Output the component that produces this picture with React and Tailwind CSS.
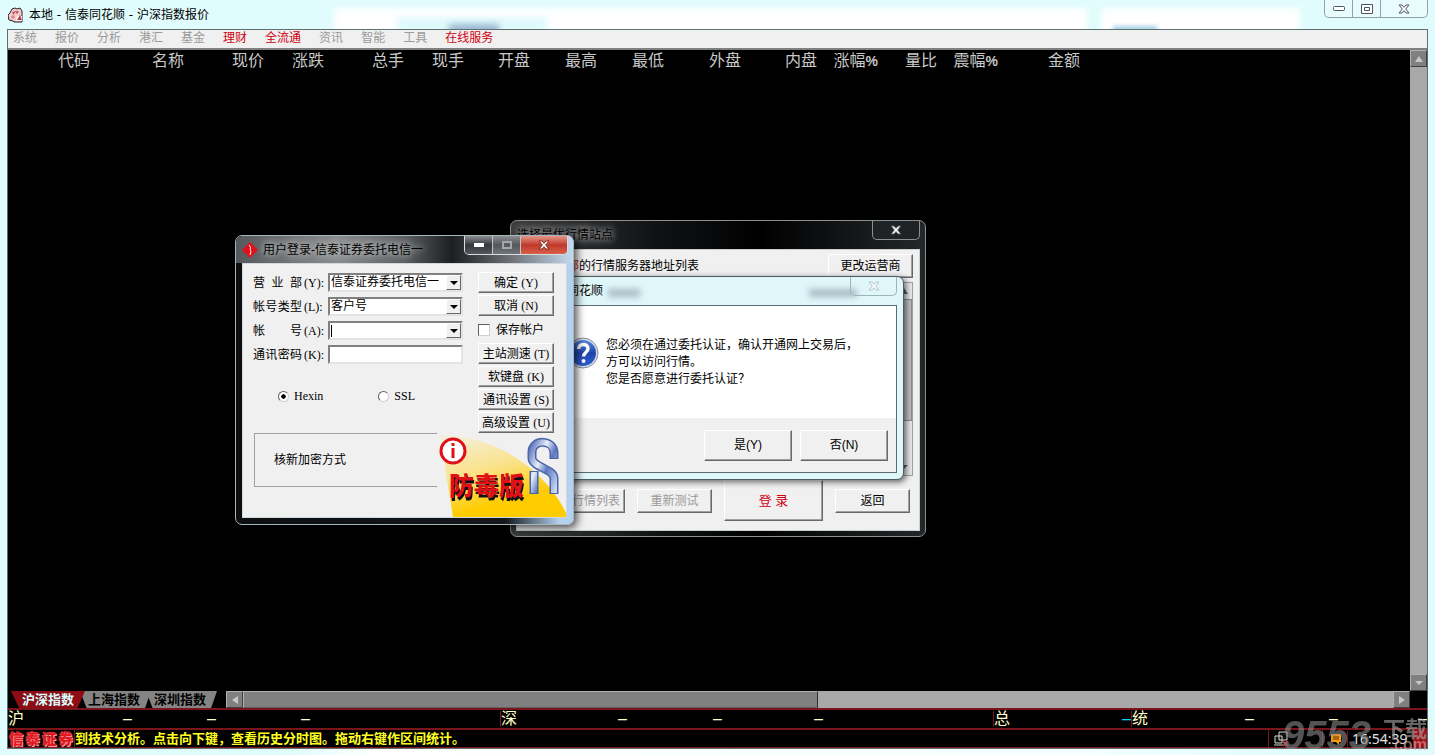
import React from "react";
import clsx from "clsx";

const menus = [
  { label: "系统" },
  { label: "报价" },
  { label: "分析" },
  { label: "港汇" },
  { label: "基金" },
  { label: "理财", hot: true },
  { label: "全流通", hot: true },
  { label: "资讯" },
  { label: "智能" },
  { label: "工具" },
  { label: "在线服务", hot: true },
];

const columns = [
  { label: "代码", width: "w-[82px]" },
  { label: "名称", width: "w-[94px]" },
  { label: "现价", width: "w-[80px]" },
  { label: "涨跌", width: "w-[60px]" },
  { label: "总手", width: "w-[80px]" },
  { label: "现手", width: "w-[60px]" },
  { label: "开盘", width: "w-[66px]" },
  { label: "最高", width: "w-[67px]" },
  { label: "最低", width: "w-[67px]" },
  { label: "外盘", width: "w-[77px]" },
  { label: "内盘", width: "w-[76px]" },
  { label: "涨幅", percent: true, width: "w-[61px]" },
  { label: "量比", width: "w-[59px]" },
  { label: "震幅", percent: true, width: "w-[61px]" },
  { label: "金额", width: "w-[82px]" },
];

const bevel =
  "bg-[#f0f0f0] border border-t-white border-l-white border-r-[#696969] border-b-[#696969] shadow-[inset_-1px_-1px_0_#a0a0a0] whitespace-nowrap";
const sunken =
  "bg-white border-2 border-t-[#808080] border-l-[#808080] border-r-[#e3e3e3] border-b-[#e3e3e3]";

function Key({ children }) {
  return (
    <span className="font-['Liberation_Serif',serif] text-xs leading-4">
      {children}
    </span>
  );
}

function Triangle({ dir, className }) {
  const points = {
    up: "4,1 8,7 0,7",
    down: "0,2 8,2 4,6",
    left: "7,0 7,8 1,4",
    right: "1,0 7,4 1,8",
  };
  return (
    <svg viewBox="0 0 8 8" className={clsx("w-2 h-2", className)}>
      <polygon points={points[dir]} fill="currentColor" />
    </svg>
  );
}

function ScrollButton({ dir, label }) {
  return (
    <button
      type="button"
      aria-label={label}
      className="w-[17px] h-[17px] shrink-0 flex items-center justify-center bg-[#808080] text-[#c8c8c8] border border-t-[#b0b0b0] border-l-[#b0b0b0] border-r-[#404040] border-b-[#404040]"
    >
      <Triangle dir={dir} />
    </button>
  );
}

function CloseGlyph({ fill, stroke }) {
  return (
    <svg viewBox="0 0 12 10" className="w-3 h-[10px]">
      <path
        d="M1 1h3l2 2.3L8 1h3L7.7 5 11 9H8L6 6.7 4 9H1l3.3-4z"
        fill={fill}
        stroke={stroke}
        strokeWidth="1"
      />
    </svg>
  );
}

function AppTitle() {
  return (
    <header className="relative h-[29px] flex items-center justify-between">
      <div className="absolute inset-0 overflow-hidden" aria-hidden="true">
        <div className="absolute left-[23%] right-[24%] top-2 h-8 bg-white blur-[3px]" />
        <div className="absolute left-[77%] right-[9%] top-2 h-8 bg-white blur-[3px]" />
        <div className="absolute left-[390px] w-[150px] top-[17px] h-4 bg-[#e0fafc] blur-[3px]" />
        <div className="absolute left-[442px] w-[50px] top-[24px] h-3 bg-[#9cb8d0] blur-[3px]" />
        <div className="absolute left-[1106px] w-[44px] top-[26px] h-2 bg-[#a8d0e8] blur-[2px]" />
      </div>
      <div className="relative flex items-center gap-[5px] pl-px">
        <svg viewBox="0 0 16 16" className="w-4 h-4">
          <path
            d="M4 2 7 1 9 2l3-1 2 3v11H6L5 14 1 13 0 8l2-2z"
            fill="#f3c9cb"
            stroke="#2b2024"
          />
          <path d="M9 9h5v5H8z" fill="#fff" />
          <path d="M12 8 9 13h5zM4 5l2 3 1-4 2 3 2-3" fill="#b3414b" />
          <path d="M3 10h4M5 12V8" stroke="#d2727a" />
        </svg>
        <h1 className="font-['DejaVu_Sans','Noto_Sans_CJK_SC',sans-serif] text-xs text-black">
          本地 - 信泰同花顺 - 沪深指数报价
        </h1>
      </div>
      <div className="relative self-start h-[18px] flex rounded-b-[5px] border border-t-0 border-[#8fa3a8] bg-[#e9fbfc] divide-x divide-[#8fa3a8]">
        <button
          type="button"
          aria-label="最小化"
          className="w-7 flex items-center justify-center"
        >
          <svg viewBox="0 0 12 5" className="w-3 h-[5px]">
            <rect x=".5" y=".5" width="11" height="4" rx="1" fill="#fff" stroke="#4b5563" />
          </svg>
        </button>
        <button
          type="button"
          aria-label="还原"
          className="w-7 flex items-center justify-center"
        >
          <svg viewBox="0 0 12 10" className="w-3 h-[10px]">
            <path
              d="M.5.5h11v9H.5zM3.500 3.500h5v3h-5z"
              fill="#fff"
              stroke="#4b5563"
            />
          </svg>
        </button>
        <button
          type="button"
          aria-label="关闭"
          className="w-[46px] flex items-center justify-center"
        >
          <CloseGlyph fill="#fff" stroke="#4b5563" />
        </button>
      </div>
    </header>
  );
}

function MenuBar() {
  return (
    <nav className="h-5 px-[5px] flex items-start gap-[18px] bg-[#f0f0f0] border-b-2 border-[#808080]">
      {menus.map((m) => (
        <button
          key={m.label}
          type="button"
          className={clsx(
            "text-xs leading-4",
            m.hot ? "text-[#d00010]" : "text-[#9a9a9a]"
          )}
        >
          {m.label}
        </button>
      ))}
    </nav>
  );
}

function QuoteTable() {
  return (
    <div className="flex-1 min-w-0 overflow-hidden">
      <table className="table-fixed w-[1072px] text-base leading-[22px] text-[#c8c8c8]">
        <thead>
          <tr>
            {columns.map((c) => (
              <th
                key={c.label}
                className={clsx(c.width, "p-0 text-right font-normal")}
              >
                {c.label}
                {c.percent && (
                  <span className="font-['Liberation_Sans',sans-serif] text-sm leading-5 font-bold">
                    %
                  </span>
                )}
              </th>
            ))}
          </tr>
        </thead>
      </table>
    </div>
  );
}

function SheetTabs() {
  const tabs = ["沪深指数", "上海指数", "深圳指数"];
  return (
    <div className="w-[218px] shrink-0 flex pl-[3px] text-[13px] leading-[18px] font-bold">
      {tabs.map((t, i) => (
        <button
          key={t}
          type="button"
          className={clsx(
            "w-[74px] h-[17px]",
            i === 0
              ? "relative z-10 bg-[#8e0c14] text-[#d6ffff] [clip-path:polygon(0_0,100%_0,90%_100%,11%_100%)]"
              : "-ml-2 bg-[#848484] text-black [clip-path:polygon(4%_0,100%_0,92%_100%,13%_100%)]"
          )}
        >
          {t}
        </button>
      ))}
    </div>
  );
}

function Cell({ className, children = "–" }) {
  return <span className={clsx("text-right", className)}>{children}</span>;
}

function IndexRow() {
  return (
    <div className="h-5 flex items-center border-t-2 border-[#7c141c] text-base leading-4 text-[#ffffc8] overflow-hidden">
      <div className="w-[492px] flex">
        <span>沪</span>
        <Cell className="w-[108px]" />
        <Cell className="w-[84px]" />
        <Cell className="w-[94px]" />
      </div>
      <div className="w-[493px] flex border-l border-[#7c141c]">
        <span>深</span>
        <Cell className="w-[110px]" />
        <Cell className="w-[95px]" />
        <Cell className="w-[101px]" />
      </div>
      <div className="w-[138px] flex justify-between border-l border-[#7c141c]">
        <span>总</span>
        <Cell className="text-cyan-400" />
      </div>
      <div className="flex-1 flex border-l border-[#7c141c]">
        <span>统</span>
        <Cell className="w-[106px]" />
        <Cell className="w-[84px]" />
        <Cell className="flex-1" />
      </div>
    </div>
  );
}

function TickerRow() {
  return (
    <footer className="relative h-[20px] flex items-center border-t-2 border-b border-[#7c141c]">
      <div className="w-[67px] h-full flex items-center justify-around border-r border-[#7c141c] text-sm leading-4 font-black text-[#e01822] [text-shadow:0_0_2px_#ff8a8a,1px_1px_0_#ff9c9c,-1px_-1px_0_#c01018]">
        <span>信</span>
        <span>泰</span>
        <span>证</span>
        <span>券</span>
      </div>
      <p className="flex-1 text-[13px] leading-4 font-bold text-[#ffff20] whitespace-nowrap">
        到技术分析。点击向下键，查看历史分时图。拖动右键作区间统计。
      </p>
      <div className="h-full flex items-center border-l border-[#7c141c] pl-1">
        <svg viewBox="0 0 16 16" className="w-4 h-4">
          <path
            d="M6 1h8v8H6zM2 5h7v7H2zM1 14h9"
            fill="#111"
            stroke="#d8d8d8"
          />
          <path d="m10 10 5 5m0-5-5 5" stroke="#e02020" strokeWidth="1.500" />
        </svg>
        <div className="w-[34px] h-full mr-[7px] border-r border-[#7c141c]" />
        <svg viewBox="0 0 12 12" className="w-3 h-3">
          <path d="M1 1h10v8H9v3L6 9H1z" fill="#f59a12" />
          <path d="M3 4h6M3 6h6" stroke="#5a3200" />
        </svg>
        <time className="w-[66px] ml-[5px] pl-1 border-l border-[#7c141c] font-['Noto_Sans',sans-serif] text-sm leading-4 text-[#e0e0e0]">
          16:54:39
        </time>
        <div className="w-[14px] h-full bg-[#a01018]" />
      </div>
      <div
        className="absolute right-0 -bottom-1 w-[145px] flex items-end justify-between opacity-60 text-[#a8a8a8]"
        aria-hidden="true"
      >
        <span className="font-['Liberation_Sans',sans-serif] text-[40px] leading-8 font-black italic text-[#8a8a8a]">
          9553
        </span>
        <span className="flex flex-col items-end">
          <span className="text-[22px] leading-[18px] font-bold whitespace-nowrap">
            下载
          </span>
          <span className="font-['Liberation_Sans',sans-serif] text-base leading-3 font-bold text-[#e0a8a8]">
            .com
          </span>
        </span>
      </div>
    </footer>
  );
}

function ServerWindow() {
  return (
    <section className="absolute left-[510px] top-[220px] w-[416px] h-[317px] flex flex-col rounded-[7px] border border-[#8c9090] bg-[linear-gradient(to_right,#3a3c3d,#101214_35%,#000_60%,#24272a)] px-[5px] pb-[5px]">
      <div className="h-7 flex items-center justify-between">
        <h2 className="px-px text-xs text-black [text-shadow:0_0_6px_#999,0_0_8px_#999,0_0_10px_#888]">
          选择最优行情站点
        </h2>
        <button
          type="button"
          aria-label="关闭"
          className="self-start w-12 h-[19px] flex items-center justify-center rounded-b-[5px] border border-t-0 border-[#8c9090] bg-[#202326]"
        >
          <CloseGlyph fill="#fff" stroke="#555" />
        </button>
      </div>
      <div className="flex-1 flex flex-col border border-[#c8d0d0] bg-[#f0f0f0] pl-2 pr-[6px] pt-1">
        <div className="flex justify-between items-center text-xs">
          <p className="w-[174px] flex justify-end whitespace-nowrap">
            电信<span className="text-[#c02020]">部</span>的行情服务器地址列表
          </p>
          <button type="button" className={clsx(bevel, "w-[85px] h-6")}>
            更改运营商
          </button>
        </div>
        <div className="mt-1 h-[194px] flex justify-end border border-[#a0a0a0]">
          <div className="w-4 flex flex-col items-center text-[#606060] bg-[#e8e8e8]">
            <Triangle dir="up" className="my-1" />
            <div className="w-full h-[122px] bg-[#c0c0c4] border border-[#8a8a8a]" />
            <div className="flex-1" />
            <Triangle dir="down" className="my-1" />
          </div>
        </div>
        <div className="pt-1 flex items-center justify-end gap-3 pr-[3px] text-xs">
          <button type="button" disabled className={clsx(bevel, "w-[75px] h-6 pr-1 text-right text-[#9a9a9a]")}>
            行情列表
          </button>
          <button type="button" disabled className={clsx(bevel, "w-[75px] h-6 text-[#9a9a9a]")}>
            重新测试
          </button>
          <button type="button" className={clsx(bevel, "w-[99px] h-[41px] text-[13px] text-[#d00010]")}>
            登 录
          </button>
          <button type="button" className={clsx(bevel, "w-[75px] h-6")}>
            返回
          </button>
        </div>
      </div>
    </section>
  );
}

function ConfirmBox() {
  return (
    <section
      role="dialog"
      aria-label="同花顺"
      className="absolute left-[535px] top-[276px] w-[369px] h-[204px] flex flex-col rounded-[7px] border border-[#4c5c60] bg-[#e0f7fa] shadow-[2px_2px_6px_rgba(0,0,0,0.6)] px-[6px] pb-[6px]"
    >
      <div className="relative h-7 flex items-center justify-between">
        <div className="absolute inset-0 overflow-hidden" aria-hidden="true">
          <div className="absolute left-[66px] w-8 top-3 h-2 bg-[#a8bac2] blur-[3px]" />
          <div className="absolute right-10 w-12 top-3 h-2 bg-[#a8bac2] blur-[3px]" />
        </div>
        <h2 className="relative pl-px text-xs text-black">信泰同花顺</h2>
        <button
          type="button"
          aria-label="关闭"
          className="relative self-start w-[47px] h-[19px] flex items-center justify-center rounded-b-[5px] border border-t-0 border-[#9fb4b8]"
        >
          <CloseGlyph fill="#fff" stroke="#b4c2c6" />
        </button>
      </div>
      <div className="flex-1 flex flex-col border border-[#5a6c70] bg-[#f0f0f0]">
        <div className="flex-1 flex items-start gap-[7px] pl-6 pt-[31px] bg-white">
          <svg viewBox="0 0 32 32" className="w-8 h-8 shrink-0">
            <defs>
              <linearGradient id="ask" x1="0" y1="0" x2="0" y2="1">
                <stop offset="0" stopColor="#5b86e0" />
                <stop offset=".5" stopColor="#1f45ad" />
                <stop offset="1" stopColor="#2f5fd0" />
              </linearGradient>
            </defs>
            <circle cx="16" cy="16" r="15" fill="#d8dde6" stroke="#8590a4" />
            <circle cx="16" cy="16" r="13" fill="url(#ask)" />
            <path
              d="M11.500 12c0-6 9.500-6 9.500-.5 0 4-4.500 4-4.500 8"
              fill="none"
              stroke="#fff"
              strokeWidth="3.500"
            />
            <circle cx="16.500" cy="24" r="2" fill="#fff" />
          </svg>
          <p className="text-xs leading-[17px] text-black">
            您必须在通过委托认证，确认开通网上交易后，
            <br />
            方可以访问行情。
            <br />
            您是否愿意进行委托认证？
          </p>
        </div>
        <div className="h-[54px] flex items-center justify-end gap-2 pr-2 text-xs">
          <button type="button" className={clsx(bevel, "w-[88px] h-[31px]")}>
            是(Y)
          </button>
          <button type="button" className={clsx(bevel, "w-[88px] h-[31px]")}>
            否(N)
          </button>
        </div>
      </div>
    </section>
  );
}

function DropButton() {
  return (
    <span className="w-[15px] h-[15px] shrink-0 flex items-center justify-center bg-[#f0f0f0] border border-t-white border-l-white border-r-[#696969] border-b-[#696969]">
      <Triangle dir="down" />
    </span>
  );
}

function FieldLabel({ htmlFor, chars, hotkey }) {
  return (
    <label htmlFor={htmlFor} className="w-[75px] flex gap-[2px] text-xs leading-4">
      <span className="w-[49px] flex justify-between">
        {chars.split("").map((ch) => (
          <span key={ch}>{ch}</span>
        ))}
      </span>
      <Key>{hotkey}</Key>
    </label>
  );
}

function SelectRow({ id, chars, hotkey, value }) {
  return (
    <div className="flex items-center h-[19px]">
      <FieldLabel htmlFor={id} chars={chars} hotkey={hotkey} />
      <div className={clsx(sunken, "relative flex-1 min-w-0 h-[19px] flex")}>
        <select
          id={id}
          defaultValue={value}
          className="appearance-none w-full h-[15px] pl-px text-xs leading-[15px] bg-transparent outline-none"
        >
          <option>{value}</option>
        </select>
        <div className="absolute right-0 top-0 pointer-events-none">
          <DropButton />
        </div>
      </div>
    </div>
  );
}

function Banner() {
  return (
    <svg viewBox="0 0 127 84" className="w-[127px] h-[84px] shrink-0">
      <defs>
        <linearGradient id="wedge" x1=".1" y1="0" x2=".5" y2="1">
          <stop offset="0" stopColor="#f4efdc" />
          <stop offset=".45" stopColor="#fbe28a" />
          <stop offset=".85" stopColor="#ffcc00" />
        </linearGradient>
        <linearGradient id="steel" x1="0" y1="0" x2="1" y2="1">
          <stop offset="0" stopColor="#5a74b8" />
          <stop offset=".35" stopColor="#e8eefc" />
          <stop offset=".6" stopColor="#5b77bd" />
          <stop offset="1" stopColor="#c8d6f4" />
        </linearGradient>
      </defs>
      <path d="M1 2C56 2 106 36 127 80v4H14z" fill="url(#wedge)" />
      <g fill="none">
        <path
          d="M115 26v-6c0-14-22-14-22-1v6c0 9 22 11 22 20v16M95 38v23"
          stroke="#4a64a8"
          strokeWidth="9"
        />
        <path
          d="M115 25v-5c0-14-22-14-22-1v6c0 9 22 11 22 20v15M95 39v21"
          stroke="url(#steel)"
          strokeWidth="6"
        />
      </g>
      <circle cx="14" cy="18" r="12" fill="#fff" stroke="#e01018" strokeWidth="3" />
      <path d="M12.500 15h3v10h-3zM12.500 10h3v3h-3z" fill="#e01018" />
      <g className="[filter:drop-shadow(1px_3px_0_#111)]">
        <text
          x="10"
          y="62"
          fontFamily="'Noto Sans CJK SC', sans-serif"
          fontSize="25"
          fontWeight="900"
          fill="#e01018"
        >
          防毒版
        </text>
      </g>
    </svg>
  );
}

function LoginWindow() {
  const cap = "flex items-center justify-center h-full";
  return (
    <section
      role="dialog"
      aria-label="用户登录"
      className="absolute left-[235px] top-[235px] w-[339px] h-[290px] flex flex-col rounded-[7px] border border-[#a8b4bc] bg-[linear-gradient(to_right,#0c0e10,#14181c_80%,#b4d2f0_96%)] shadow-[3px_3px_8px_rgba(0,0,0,0.7)] px-[6px] pb-[6px]"
    >
      <div className="-mx-[6px] pl-[6px] pr-[5px] h-[27px] flex items-center justify-between rounded-t-[6px] bg-[linear-gradient(to_right,#55595c,#8a8c8e_30%,#5c5f61_50%,#1c1e20_64%,#707478_82%,#c4daf0)]">
        <h2 className="flex items-center gap-[5px] text-xs text-black [text-shadow:0_0_6px_#ccc,0_0_8px_#bbb]">
          <svg viewBox="0 0 16 16" className="w-4 h-4">
            <path d="m8 0 8 8-8 8-8-8z" fill="#e01018" />
            <path d="M7 3c3 3 0 4 2 6l-1 4" fill="none" stroke="#fff" />
          </svg>
          用户登录-信泰证券委托电信一
        </h2>
        <div className="self-start h-[19px] flex overflow-hidden rounded-b-[5px] border border-t-0 border-[#d8dde0] divide-x divide-[#c0c6ca]">
          <button
            type="button"
            aria-label="最小化"
            className={clsx(cap, "w-7 bg-[linear-gradient(#8a8e92,#34383c_50%,#54585c)]")}
          >
            <span className="w-[10px] h-1 bg-white" />
          </button>
          <button
            type="button"
            aria-label="最大化"
            disabled
            className={clsx(cap, "w-7 bg-[linear-gradient(#8a8e92,#54585c_50%,#70757a)]")}
          >
            <span className="w-[10px] h-2 border-2 border-[#a4a8ac]" />
          </button>
          <button
            type="button"
            aria-label="关闭"
            className={clsx(cap, "w-[46px] bg-[linear-gradient(#e4988a,#c0392b_50%,#d8604a)]")}
          >
            <CloseGlyph fill="#fff" stroke="#7c2a20" />
          </button>
        </div>
      </div>
      <form className="flex-1 flex flex-col border border-[#d0d8dc] bg-[#f0f0f0] text-black">
        <div className="flex pl-[10px] pr-3 pt-2">
          <div className="flex-1 min-w-0 flex flex-col gap-[5px] pr-[15px] pt-px">
            <SelectRow
              id="branch"
              chars="营业部"
              hotkey="(Y):"
              value="信泰证券委托电信一"
            />
            <SelectRow id="kind" chars="帐号类型" hotkey="(L):" value="客户号" />
            <div className="flex items-center h-[19px]">
              <FieldLabel htmlFor="account" chars="帐号" hotkey="(A):" />
              <div className={clsx(sunken, "flex-1 min-w-0 h-[19px] flex items-center")}>
                <span className="w-px h-3 ml-px bg-black" />
                <input
                  id="account"
                  type="text"
                  className="flex-1 min-w-0 h-[15px] text-xs outline-none"
                />
                <DropButton />
              </div>
            </div>
            <div className="flex items-center h-[19px]">
              <FieldLabel htmlFor="secret" chars="通讯密码" hotkey="(K):" />
              <input
                id="secret"
                type="password"
                className={clsx(sunken, "flex-1 min-w-0 h-[19px] text-xs outline-none")}
              />
            </div>
            <div className="flex gap-[55px] mt-[19px] pl-[25px]">
              {["Hexin", "SSL"].map((name) => (
                <label key={name} className="h-4 flex items-center gap-[5px]">
                  <input
                    type="radio"
                    name="cipher"
                    defaultChecked={name === "Hexin"}
                    className="appearance-none w-[11px] h-[11px] rounded-full bg-white border border-t-[#606060] border-l-[#606060] border-r-[#d0d0d0] border-b-[#d0d0d0] checked:bg-[radial-gradient(#000_30%,#fff_40%)]"
                  />
                  <Key>{name}</Key>
                </label>
              ))}
            </div>
          </div>
          <div className="w-[76px] shrink-0 flex flex-col gap-[2px] text-xs">
            <button type="submit" className={clsx(bevel, "h-[21px]")}>
              确定 <Key>(Y)</Key>
            </button>
            <button type="button" className={clsx(bevel, "h-[21px]")}>
              取消 <Key>(N)</Key>
            </button>
            <label className="h-[23px] flex items-center gap-[6px] whitespace-nowrap">
              <input
                type="checkbox"
                className="appearance-none w-3 h-3 bg-white border border-t-[#606060] border-l-[#606060] border-r-[#d0d0d0] border-b-[#d0d0d0]"
              />
              保存帐户
            </label>
            <button type="button" className={clsx(bevel, "h-[21px]")}>
              主站测速 <Key>(T)</Key>
            </button>
            <button type="button" className={clsx(bevel, "h-[21px]")}>
              软键盘 <Key>(K)</Key>
            </button>
            <button type="button" className={clsx(bevel, "h-[21px]")}>
              通讯设置 <Key>(S)</Key>
            </button>
            <button type="button" className={clsx(bevel, "h-[21px]")}>
              高级设置 <Key>(U)</Key>
            </button>
          </div>
        </div>
        <div className="flex items-start justify-between pl-[11px]">
          <p className="w-[183px] h-[54px] flex items-center pl-[19px] border border-r-0 border-[#a0a0a0] text-xs">
            核新加密方式
          </p>
          <Banner />
        </div>
      </form>
    </section>
  );
}

export default function App() {
  return (
    <div className="relative min-h-screen flex flex-col px-[7px] pb-[6px] overflow-hidden bg-[#e0fcfc] font-['Liberation_Sans','Noto_Sans_CJK_SC',sans-serif]">
      <div
        className="absolute inset-x-0 bottom-0 h-2 bg-[linear-gradient(to_right,#e0fcfc_20%,#fff_26%,#f4ffff_76%,#e0fcfc_92%)]"
        aria-hidden="true"
      />
      <AppTitle />
      <main className="relative flex-1 flex flex-col border border-[#5c7070] bg-black">
        <MenuBar />
        <div className="flex-1 flex">
          <QuoteTable />
          <div className="w-[17px] flex flex-col justify-between bg-[#a8a8a8]">
            <ScrollButton dir="up" label="向上滚动" />
            <ScrollButton dir="down" label="向下滚动" />
          </div>
        </div>
        <div className="h-[17px] flex pr-[17px]">
          <SheetTabs />
          <div className="flex-1 flex bg-[#a8a8a8]">
            <ScrollButton dir="left" label="向左滚动" />
            <div className="flex-1">
              <div className="w-1/2 h-full bg-[#808080] border border-t-[#b0b0b0] border-l-[#b0b0b0] border-r-[#303030] border-b-[#606060]" />
            </div>
            <ScrollButton dir="right" label="向右滚动" />
          </div>
        </div>
        <IndexRow />
        <TickerRow />
      </main>
      <ServerWindow />
      <ConfirmBox />
      <LoginWindow />
    </div>
  );
}
